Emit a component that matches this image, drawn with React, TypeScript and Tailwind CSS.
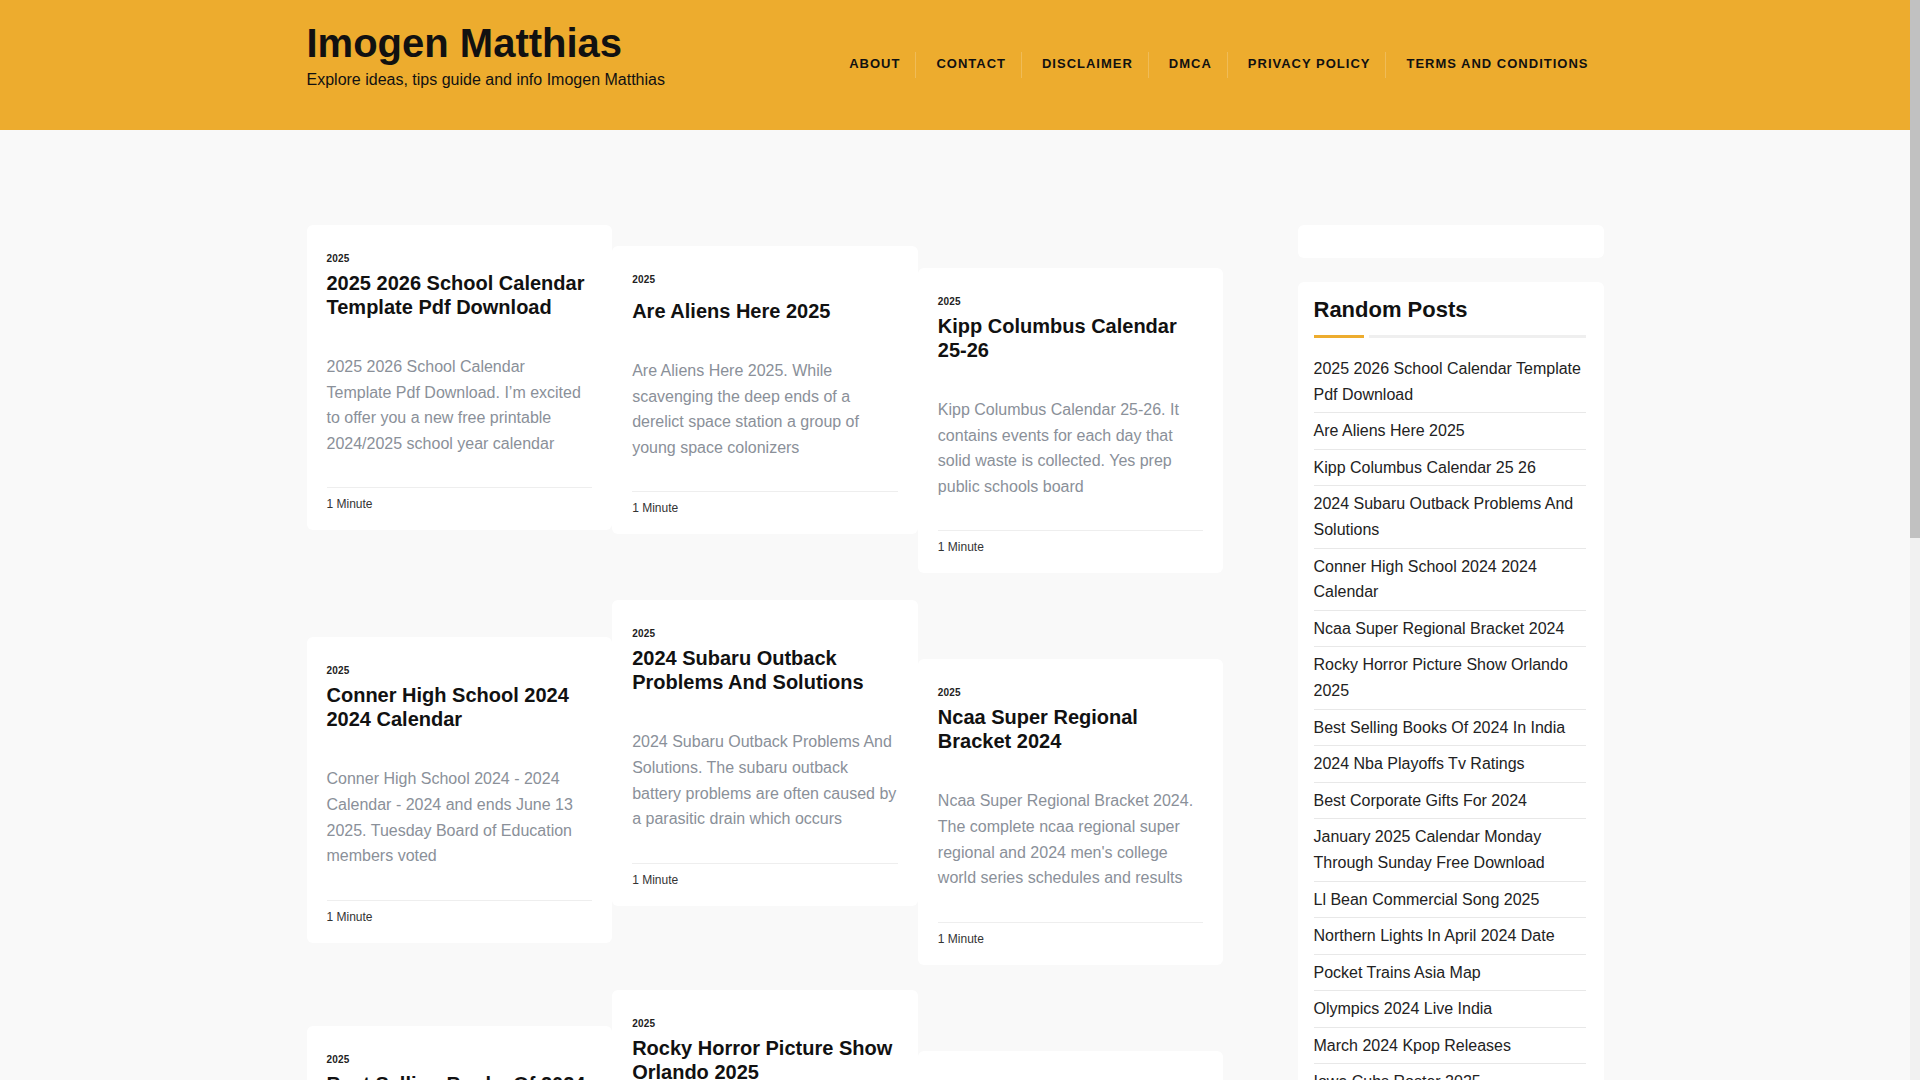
const navLinks = ["About", "Contact", "Disclaimer", "DMCA", "Privacy Policy", "Terms and Conditions"];

type Post = {
  title: string;
  excerpt: string;
  gap: string;
};

// each column is stacked on its own, the gap class is the space above the card
const columns: Post[][] = [
  [
    {
      title: "2025 2026 School Calendar Template Pdf Download",
      excerpt:
        "2025 2026 School Calendar Template Pdf Download. I’m excited to offer you a new free printable 2024/2025 school year calendar",
      gap: "h-0",
    },
    {
      title: "Conner High School 2024 2024 Calendar",
      excerpt:
        "Conner High School 2024 - 2024 Calendar - 2024 and ends June 13 2025. Tuesday Board of Education members voted",
      gap: "h-[107px]",
    },
    {
      title: "Best Selling Books Of 2024 In India",
      excerpt:
        "Best Selling Books Of 2024 In India. From gripping thrillers to heartfelt memoirs, these are the titles readers loved",
      gap: "h-[83px]",
    },
  ],
  [
    {
      title: "Are Aliens Here 2025",
      excerpt:
        "Are Aliens Here 2025. While scavenging the deep ends of a derelict space station a group of young space colonizers",
      gap: "h-[21px]",
    },
    {
      title: "2024 Subaru Outback Problems And Solutions",
      excerpt:
        "2024 Subaru Outback Problems And Solutions. The subaru outback battery problems are often caused by a parasitic drain which occurs",
      gap: "h-[66px]",
    },
    {
      title: "Rocky Horror Picture Show Orlando 2025",
      excerpt:
        "Rocky Horror Picture Show Orlando 2025. Grab your fishnets and join the audience for a night of singing and dancing",
      gap: "h-[84px]",
    },
  ],
  [
    {
      title: "Kipp Columbus Calendar 25-26",
      excerpt:
        "Kipp Columbus Calendar 25-26. It contains events for each day that solid waste is collected. Yes prep public schools board",
      gap: "h-[43px]",
    },
    {
      title: "Ncaa Super Regional Bracket 2024",
      excerpt:
        "Ncaa Super Regional Bracket 2024. The complete ncaa regional super regional and 2024 men's college world series schedules and results",
      gap: "h-[86px]",
    },
    {
      title: "2024 Nba Playoffs Tv Ratings",
      excerpt:
        "2024 Nba Playoffs Tv Ratings. Viewership numbers for every round of the postseason across all national networks",
      gap: "h-[86px]",
    },
  ],
];

const randomPosts = [
  "2025 2026 School Calendar Template Pdf Download",
  "Are Aliens Here 2025",
  "Kipp Columbus Calendar 25 26",
  "2024 Subaru Outback Problems And Solutions",
  "Conner High School 2024 2024 Calendar",
  "Ncaa Super Regional Bracket 2024",
  "Rocky Horror Picture Show Orlando 2025",
  "Best Selling Books Of 2024 In India",
  "2024 Nba Playoffs Tv Ratings",
  "Best Corporate Gifts For 2024",
  "January 2025 Calendar Monday Through Sunday Free Download",
  "Ll Bean Commercial Song 2025",
  "Northern Lights In April 2024 Date",
  "Pocket Trains Asia Map",
  "Olympics 2024 Live India",
  "March 2024 Kpop Releases",
  "Iowa Cubs Roster 2025",
];

function PostCard({ post }: { post: Post }) {
  return (
    <article className="bg-white rounded-md px-5 pt-[28px] pb-[18px]">
      <div className="text-[10px] leading-[12px] font-bold text-[#222] tracking-[0.2px]">2025</div>
      <h2 className="mt-[6px] min-h-[31px] flex flex-col justify-end text-[20px] leading-[24px] font-bold text-[#111]">
        <span>{post.title}</span>
      </h2>
      <p className="mt-[35px] text-[16px] leading-[25.6px] text-[#8a9099]">{post.excerpt}</p>
      <div className="mt-[31px] border-t border-[#eeeeee] pt-[8px] text-[12px] leading-[16px] text-[#333]">
        1 Minute
      </div>
    </article>
  );
}

export default function App() {
  return (
    <div className="h-screen flex overflow-hidden bg-[#f9f9f9] font-['Liberation_Sans',Arial,sans-serif]">
      <div className="flex-1 h-full overflow-hidden">
        <header className="bg-[#edac2e] h-[130px]">
          <div className="max-w-[1297px] mx-auto flex justify-between">
            <div className="pt-[19px]">
              <h1 className="text-[40px] leading-[48px] font-bold text-[#111]">Imogen Matthias</h1>
              <p className="mt-[3px] text-[16px] leading-[20px] text-[#111]">
                Explore ideas, tips guide and info Imogen Matthias
              </p>
            </div>
            <nav className="pt-[52px]">
              <ul className="flex items-center">
                {navLinks.map((link, i) => (
                  <li
                    key={link}
                    className={`h-[26px] flex items-center pl-5 pr-[15px] ${
                      i > 0 ? "border-l border-white/20" : ""
                    }`}
                  >
                    <a className="pb-[3px] text-[13px] font-bold uppercase tracking-[1px] text-[#111]">{link}</a>
                  </li>
                ))}
              </ul>
            </nav>
          </div>
        </header>

        <div className="max-w-[1297px] mx-auto pt-[95px] flex items-start gap-[74px]">
          <main className="w-[917px] grid grid-cols-3 items-start">
            {columns.map((col, ci) => (
              <div key={ci} className="flex flex-col">
                {col.map((post) => (
                  <div key={post.title}>
                    <div className={post.gap} />
                    <PostCard post={post} />
                  </div>
                ))}
              </div>
            ))}
          </main>

          <aside className="w-[306px]">
            <div className="h-[33px] bg-white rounded-md" />
            <div className="mt-[24px] bg-white rounded-md pl-4 pr-[18px] pt-[15px] pb-5">
              <h3 className="text-[22px] leading-[26px] font-bold text-[#111]">Random Posts</h3>
              <div className="mt-[12px] flex items-center gap-[5px]">
                <span className="w-[50px] h-[3px] bg-[#edac2e]" />
                <span className="flex-1 h-[3px] bg-[#efefef]" />
              </div>
              <ul className="mt-[13px]">
                {randomPosts.map((p) => (
                  <li key={p} className="py-[5px] border-b border-[#e8e8e8] text-[16px] leading-[25.6px] text-[#222]">
                    {p}
                  </li>
                ))}
              </ul>
            </div>
          </aside>
        </div>
      </div>

      {/* page scrollbar as seen in the capture */}
      <div className="w-[10px] h-full bg-[#f1f1f1] shrink-0">
        <div className="h-[538px] bg-[#c1c1c1]" />
      </div>
    </div>
  );
}
